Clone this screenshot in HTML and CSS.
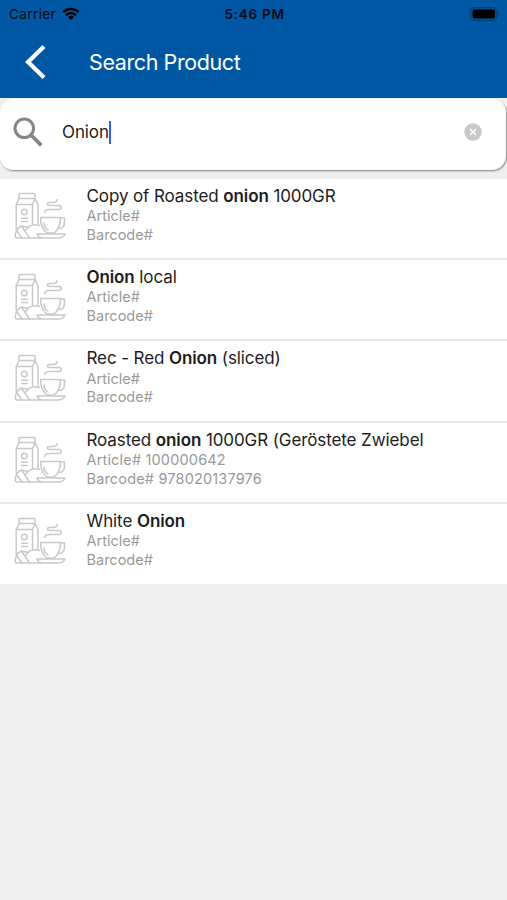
FILE: index.html
```html
<!DOCTYPE html>
<html lang="en">
<head>
<meta charset="utf-8">
<title>Search Product</title>
<link rel="stylesheet" href="styles.css">
</head>
<body>
<svg class="defs" width="0" height="0" aria-hidden="true">
  <symbol id="product" viewBox="0 0 52 48">
    <g fill="none" stroke="currentColor" stroke-width="1.5" stroke-linecap="round" stroke-linejoin="round">
      <path d="M5 6.500V2.500Q5 1.500 6 1.500H20Q21 1.500 21 2.500V6.500M5 6.500H21L24 12.500V32M5 6.500L2.200 12.500V37M2.200 12.500H18.500V32M21 6.500L18.500 12.500"/>
      <circle cx="10.300" cy="20" r="2.800"/>
      <path d="M7.500 26.300H13.500M7.500 29.500H13.500"/>
      <path d="M1.300 44C1.300 40 3 36 7.500 34C10 38 13 42 15.500 46M7.500 34L14 35.500C16 33 21 32 25.500 33.500M14 35.500L11 39M3 39L8 46M1.300 44Q1.300 46 3 46"/>
      <path d="M26.500 25.500H46.500C46.500 34 44 38 40 41H33C29 38 26.500 34 26.500 25.500ZM46.500 26H50.500V30C50.500 35 48 36.500 45 36.500M30 31C30 35 32 37 34 38"/>
      <path d="M3 46H44C48 46 50 44.500 51 42H23C24 44.500 26 46 29 46"/>
      <path d="M30.500 20.500C31.500 17.500 33 17.500 36 17.500H45C48 17.500 48 13.500 45 13.500H36C32.500 13.500 32.500 10.500 36 10.500H39C42 10.500 43 9.500 43 7.500"/>
    </g>
  </symbol>
</svg>
<header class="header">
  <div class="status">
    <div class="carrier"><span>Carrier</span>
      <svg width="18" height="14" viewBox="0 0 18 14"><g fill="none" stroke="#000" stroke-width="2.400"><path d="M1.200 5.200C5.500 .9 12.500 .9 16.800 5.200"/><path d="M4 8.200C6.900 5.500 11.100 5.500 14 8.200"/></g><path d="M9 13L5.900 10C7.600 8.400 10.400 8.400 12.100 10Z"/></svg>
    </div>
    <div class="time">5:46 PM</div>
    <svg class="battery" width="31" height="14" viewBox="0 0 31 14"><rect x=".7" y=".7" width="26" height="12.600" rx="4" fill="none" stroke="#003d78" stroke-width="1.200"/><rect x="2.500" y="2.500" width="22.500" height="9" rx="2"/><path d="M28.300 5L30 7L28.300 9Z" fill="#003d78"/></svg>
  </div>
  <div class="nav">
    <svg width="22" height="34" viewBox="0 0 22 34"><path d="M20 1.500L4 17L20 32.500" fill="none" stroke="#fff" stroke-width="4.200"/></svg>
    <h1>Search Product</h1>
  </div>
</header>
<div class="search-area">
  <div class="search">
    <svg class="glass" width="30" height="30" viewBox="0 0 30 30"><g fill="none" stroke="#858585" stroke-width="3"><circle cx="11.300" cy="11.300" r="9.300"/><path d="M18 18L28.300 28.300" stroke-width="3.800"/></g></svg>
    <span class="query">Onion</span><i class="caret"></i>
    <svg class="clear" width="18" height="18" viewBox="0 0 18 18"><circle cx="9" cy="9" r="8.700" fill="#c8c8c8"/><path d="M6 6L12 12M12 6L6 12" stroke="#fff" stroke-width="1.600"/></svg>
  </div>
</div>
<main class="list">
  <article class="row"><svg class="thumb"><use href="#product"/></svg><div><h2>Copy of Roasted <b>onion</b> 1000GR</h2><p>Article#</p><p>Barcode#</p></div></article>
  <article class="row"><svg class="thumb"><use href="#product"/></svg><div><h2><b>Onion</b> local</h2><p>Article#</p><p>Barcode#</p></div></article>
  <article class="row"><svg class="thumb"><use href="#product"/></svg><div><h2>Rec - Red <b>Onion</b> (sliced)</h2><p>Article#</p><p>Barcode#</p></div></article>
  <article class="row"><svg class="thumb"><use href="#product"/></svg><div><h2>Roasted <b>onion</b> 1000GR (Geröstete Zwiebel</h2><p class="wide">Article# 100000642</p><p class="wide">Barcode# 978020137976</p></div></article>
  <article class="row"><svg class="thumb"><use href="#product"/></svg><div><h2>White <b>Onion</b></h2><p>Article#</p><p>Barcode#</p></div></article>
</main>
</body>
</html>
```
FILE: styles.css
```css
* { box-sizing: border-box; }
body { margin: 0; height: 900px; overflow: hidden; background: #efefef; font-family: Inter, "Liberation Sans", sans-serif; color: #1c1c1c; }
h1, h2, p { margin: 0; font-weight: 400; white-space: nowrap; }
.defs { display: block; }
.header { height: 98px; background: #0057a3; }
.status { display: grid; grid-template-columns: 1fr auto 1fr; align-items: center; height: 27px; padding: 0 6px 0 9px; font-size: 13.5px; color: #000b18; }
.carrier { display: flex; align-items: center; gap: 6px; letter-spacing: .4px; }
.time { font-weight: 600; letter-spacing: .75px; margin-left: -1px; }
.battery { justify-self: end; }
.nav { display: flex; align-items: center; height: 70px; padding-left: 24px; gap: 43px; color: #fff; }
.nav h1 { font-size: 21.5px; line-height: 30px; letter-spacing: -.4px; }
.search-area { height: 81px; padding-top: 1px; background: #efefef; }
.search { display: flex; align-items: center; height: 72px; padding: 0 25px 6px 13px; background: #fff; border-radius: 14px; box-shadow: inset -1px -1px 1px #999, 0 1px 1px #ccc; }
.query { margin-left: 19px; font-size: 17px; letter-spacing: -.1px; }
.caret { width: 2px; height: 23px; background: #3b5bdd; }
.clear { margin-left: auto; }
.list { background: #fff; }
.row { display: flex; height: 81.2px; padding: 7px 0 0 14px; border-bottom: 2px solid #e8e8e8; }
.row:last-child { height: 80px; border-bottom: 0; }
.thumb { width: 52px; height: 48px; margin: 6px 20.5px 0 0; color: #c9c9c9; }
.row h2 { margin-bottom: 1.3px; font-size: 17px; line-height: 20px; letter-spacing: -.1px; }
.row b { font-weight: 600; }
.row p { font-size: 14.5px; line-height: 18.7px; color: #999; }
.row .wide { letter-spacing: .17px; }
```
